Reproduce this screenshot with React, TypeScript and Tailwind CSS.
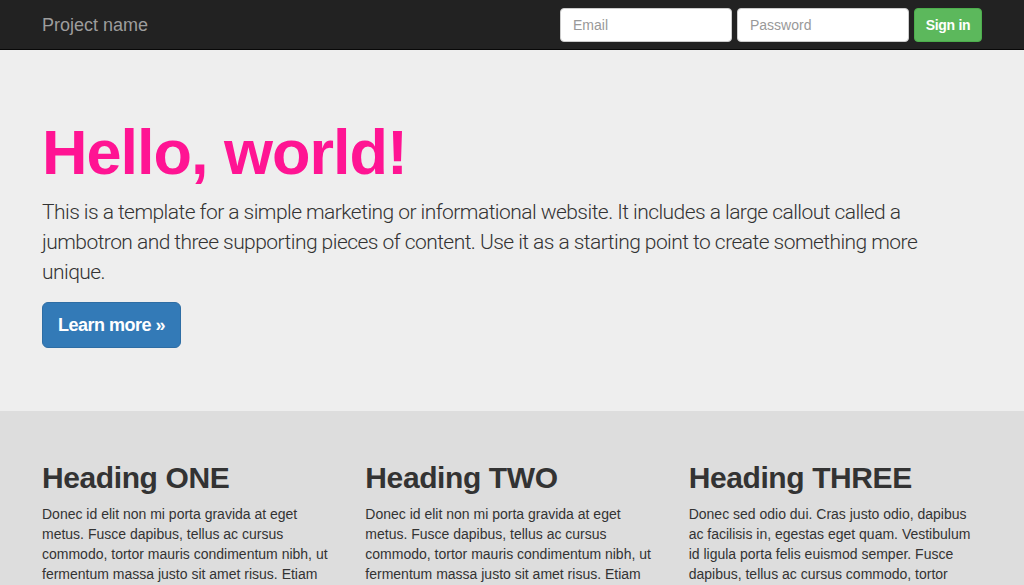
import React from 'react';

const columns = [
  {
    title: 'Heading ONE',
    text: 'Donec id elit non mi porta gravida at eget metus. Fusce dapibus, tellus ac cursus commodo, tortor mauris condimentum nibh, ut fermentum massa justo sit amet risus. Etiam porta sem malesuada magna mollis euismod. Donec sed odio dui.',
  },
  {
    title: 'Heading TWO',
    text: 'Donec id elit non mi porta gravida at eget metus. Fusce dapibus, tellus ac cursus commodo, tortor mauris condimentum nibh, ut fermentum massa justo sit amet risus. Etiam porta sem malesuada magna mollis euismod. Donec sed odio dui.',
  },
  {
    title: 'Heading THREE',
    text: 'Donec sed odio dui. Cras justo odio, dapibus ac facilisis in, egestas eget quam. Vestibulum id ligula porta felis euismod semper. Fusce dapibus, tellus ac cursus commodo, tortor mauris condimentum nibh, ut fermentum massa justo sit amet risus.',
  },
];

export default function App() {
  return (
    <div className="min-h-screen bg-[#dddddd] font-['Liberation_Sans',Arial,sans-serif] text-[14px] leading-[20px] text-[#333]">
      {/* navbar */}
      <nav className="h-[50px] bg-[#222] border-b border-[#080808]">
        <div className="mx-auto w-[970px] px-[15px] h-full flex items-start justify-between">
          <a href="#" className="text-[18px] leading-[20px] py-[15px] text-[#9d9d9d]">
            Project name
          </a>
          <form className="flex gap-[5px] mt-[8px]" onSubmit={(e) => e.preventDefault()}>
            <input
              type="text"
              placeholder="Email"
              className="w-[172px] h-[34px] px-[12px] bg-white border border-[#ccc] rounded-[4px] text-[14px] text-[#555] placeholder:text-[#999] outline-none"
            />
            <input
              type="password"
              placeholder="Password"
              className="w-[172px] h-[34px] px-[12px] bg-white border border-[#ccc] rounded-[4px] text-[14px] text-[#555] placeholder:text-[#999] outline-none"
            />
            <button
              type="submit"
              className="w-[68px] h-[34px] bg-[#5cb85c] border border-[#4cae4c] rounded-[4px] text-white text-[14px] font-bold tracking-[-0.3px]"
            >
              Sign in
            </button>
          </form>
        </div>
      </nav>

      {/* jumbotron */}
      <div className="bg-[#eeeeee] pt-[48px] pb-[48px]">
        <div className="mx-auto w-[970px] px-[15px]">
          <h1 className="mt-[20px] mb-[10px] text-[63px] leading-[69px] font-bold tracking-[-1px] text-[#ff1493]">
            Hello, world!
          </h1>
          <p className="mb-[15px] text-[21px] leading-[30px] font-light tracking-[-0.55px] text-[#333] font-['Roboto',sans-serif]">
            This is a template for a simple marketing or informational website. It includes a large callout called a
            jumbotron and three supporting pieces of content. Use it as a starting point to create something more
            unique.
          </p>
          <p className="mb-[15px]">
            <a
              href="#"
              className="inline-block w-[139px] py-[10px] text-center text-[18px] leading-[24px] font-bold tracking-[-0.5px] text-white bg-[#337ab7] border border-[#2e6da4] rounded-[6px]"
            >
              Learn more »
            </a>
          </p>
        </div>
      </div>

      {/* columns */}
      <div className="mx-auto w-[970px] pt-[30px]">
        <div className="grid grid-cols-3">
          {columns.map((c) => (
            <div key={c.title} className="px-[15px]">
              <h2 className="mt-[20px] mb-[10px] text-[30px] leading-[33px] font-bold tracking-[-0.4px] text-[#333]">{c.title}</h2>
              <p className="mb-[10px]">{c.text}</p>
              <p>
                <a href="#" className="inline-block px-[12px] py-[6px] text-[14px] text-[#333] bg-white border border-[#ccc] rounded-[4px]">
                  View details »
                </a>
              </p>
            </div>
          ))}
        </div>
      </div>
    </div>
  );
}
